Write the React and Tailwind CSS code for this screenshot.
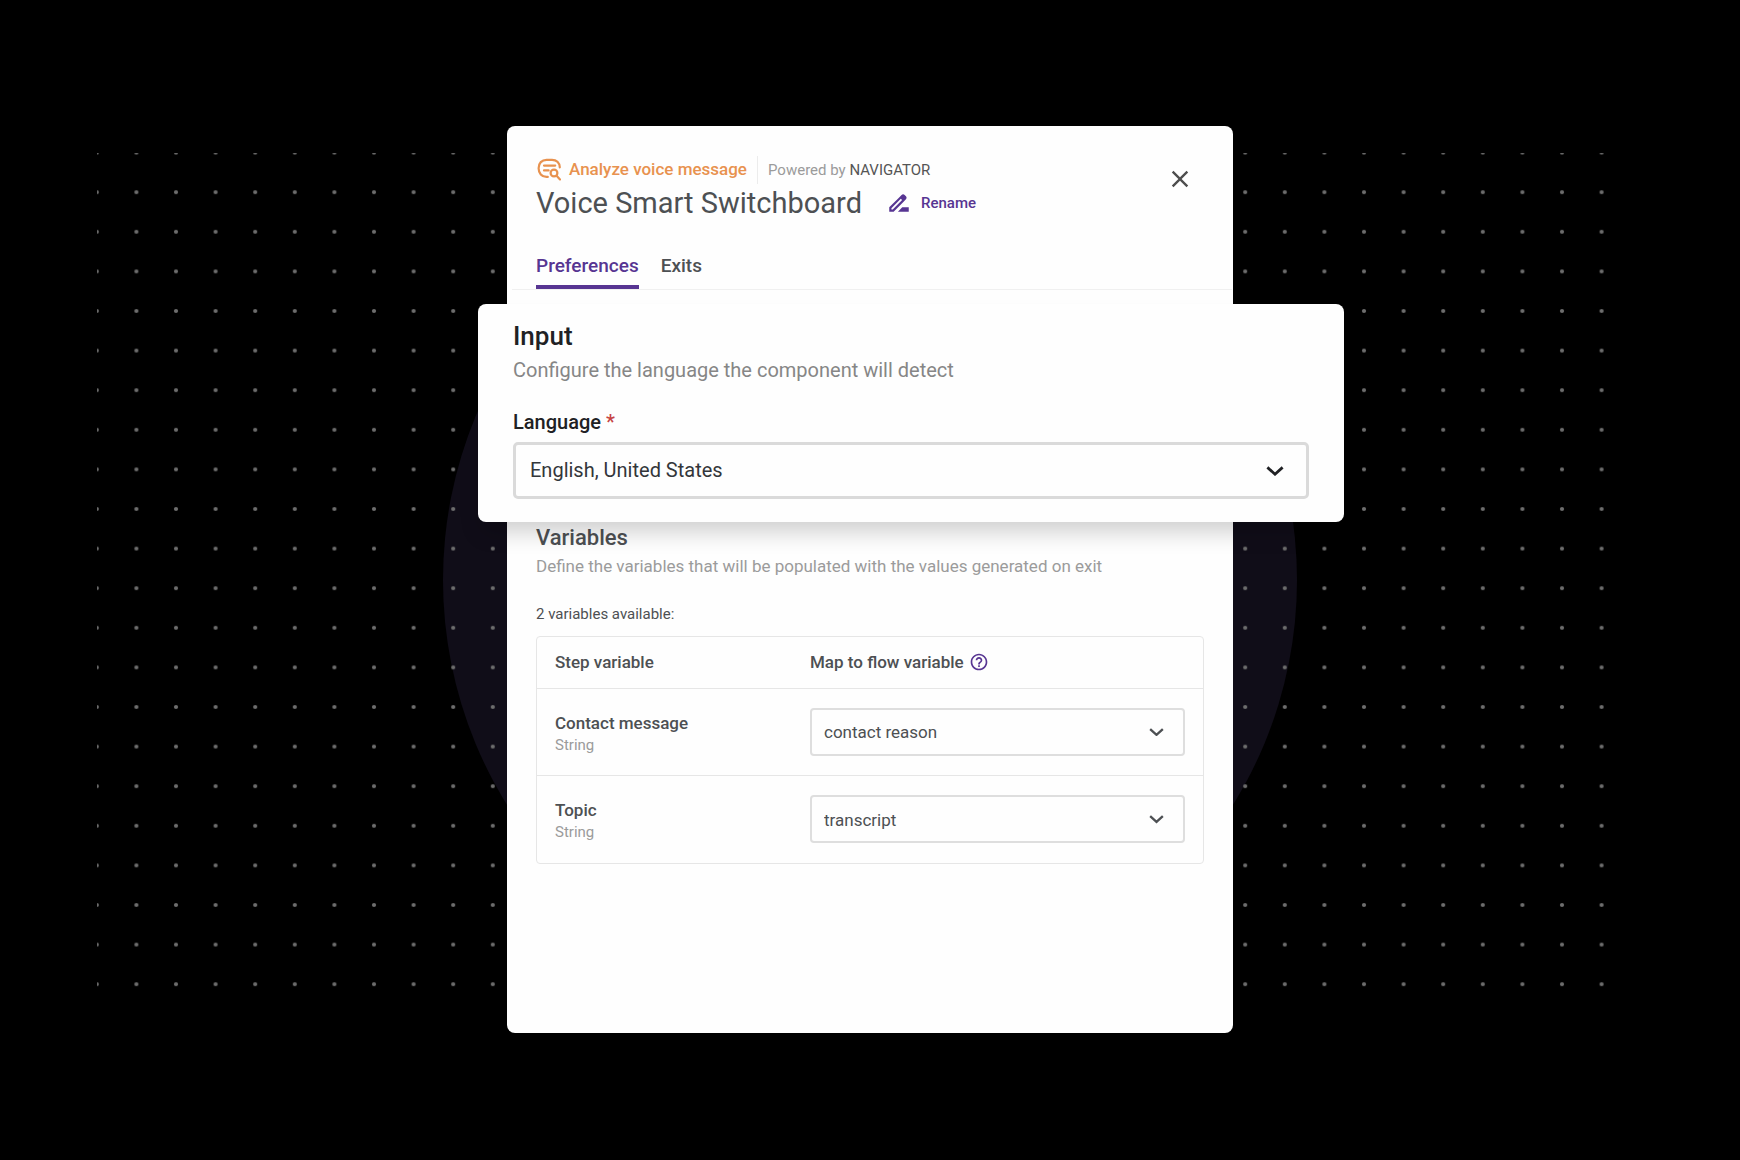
import { MdClose, MdDriveFileRenameOutline, MdHelpOutline } from "react-icons/md";

const variables = [
  { id: "contact-message", name: "Contact message", type: "String", value: "contact reason" },
  { id: "topic", name: "Topic", type: "String", value: "transcript" },
];

function Backdrop() {
  return (
    <svg
      className="absolute inset-0 h-full w-full"
      viewBox="0 0 1740 1160"
      preserveAspectRatio="xMidYMid slice"
      aria-hidden="true"
    >
      <defs>
        <pattern id="dots" x="77" y="132.8" width="39.6" height="39.6" patternUnits="userSpaceOnUse">
          <circle cx="19.8" cy="19.8" r="2.1" fill="#6e6e6e" />
        </pattern>
      </defs>
      <circle cx="870" cy="580" r="427" fill="#100d18" />
      <rect x="97" y="153" width="1507" height="850" fill="url(#dots)" />
    </svg>
  );
}

function AnalyzeIcon() {
  return (
    <svg className="size-6 shrink-0" viewBox="0 0 24 24" fill="none" stroke="currentColor" strokeWidth="2.2" strokeLinecap="round" aria-hidden="true">
      <path d="M22.8 9.4C22.6 4.8 19.5 1.8 15 1.8H9.5C4.8 1.8 1.6 5.2 1.6 10.2S4.8 18.9 9.5 18.9H10.8" />
      <path d="M7 7.6H18.2M7 12.4H11.6" />
      <circle cx="17" cy="15" r="3.4" />
      <path d="M19.6 17.8 23 21.4" />
    </svg>
  );
}

function Chevron({ className }) {
  return (
    <svg className={className} viewBox="0 0 18 10" fill="none" stroke="currentColor" strokeWidth="2.8" aria-hidden="true">
      <path d="M1.4 1.4 9 8.2 16.6 1.4" />
    </svg>
  );
}

export default function App() {
  return (
    <div className="relative flex min-h-screen items-center justify-center overflow-hidden bg-black pt-8 pb-[34px] font-['Roboto',sans-serif]">
      <Backdrop />
      <main className="relative w-full max-w-[726px] rounded-lg bg-[#fefefe] pb-[169px] text-[#4d5053]">
        <header className="flex items-start justify-between pt-[29px] pr-[39px] pl-[29px]">
          <div>
            <div className="flex h-[31px] items-center pl-px">
              <div className="flex items-center gap-2 text-[#e8924f]">
                <AnalyzeIcon />
                <span className="text-[17px] font-medium">Analyze voice message</span>
              </div>
              <span className="mx-[10px] h-7 w-px bg-[#ececec]" />
              <span className="text-[15px] text-[#9b9b9b]">
                Powered by <span className="text-[#555555]">NAVIGATOR</span>
              </span>
            </div>
            <div className="flex items-center gap-6">
              <h1 className="text-[29px] leading-[35px]">Voice Smart Switchboard</h1>
              <button type="button" className="flex items-center gap-[9px] text-[15px] font-medium text-[#573592]">
                <MdDriveFileRenameOutline className="size-[26px]" />
                Rename
              </button>
            </div>
          </div>
          <button type="button" aria-label="Close" className="mt-[10px] text-[#4d4d4d]">
            <MdClose className="size-7" />
          </button>
        </header>

        <nav className="mr-[1px] ml-[5px] flex h-[69px] items-end gap-[22px] border-b border-[#f0f0f0] pl-6">
          <a href="#preferences" className="h-[35px] border-b-4 border-[#573592] text-[19px] leading-6 font-medium text-[#573592]">Preferences</a>
          <a href="#exits" className="h-[35px] text-[19px] leading-6 font-medium">Exits</a>
        </nav>

        <section className="relative mt-[14px] mr-[-111px] ml-[-29px] rounded-lg bg-[#fefefe] px-[35px] pt-4 pb-[23px] text-[#202124] shadow-[0_14px_22px_-4px_rgba(0,0,0,0.19)]">
          <h2 className="text-[26px] leading-8 font-medium">Input</h2>
          <p className="mt-1 text-[20px] leading-7 text-[#868686]">Configure the language the component will detect</p>
          <label htmlFor="language" className="mt-6 block text-[20px] leading-7 font-medium">
            Language <span className="text-[#c74444]">*</span>
          </label>
          <div className="relative mt-[6px]">
            <select id="language" className="h-[57px] w-full appearance-none rounded-[5px] border-[3px] border-[#dadada] bg-[#fefefe] px-[14px] text-[20px] text-[#33363a]">
              <option>English, United States</option>
            </select>
            <Chevron className="pointer-events-none absolute top-6 right-[25px] w-[18px] text-[#202124]" />
          </div>
        </section>

        <section className="px-[29px]">
          <h2 className="mt-[2px] text-[22px] leading-7 font-medium">Variables</h2>
          <p className="mt-[2px] text-[17px] leading-6 text-[#9b9b9b]">
            Define the variables that will be populated with the values generated on exit
          </p>
          <p className="mt-6 text-[15px] leading-6">2 variables available:</p>
          <div className="mt-[10px] rounded border border-[#e6e6e6]">
            <table className="w-full table-fixed border-collapse text-left">
              <thead>
                <tr className="h-[52px]">
                  <th scope="col" className="w-[273px] pl-[18px] text-[17px] font-medium">Step variable</th>
                  <th scope="col" className="text-[17px] font-medium">
                    <span className="flex items-center gap-[5px]">
                      Map to flow variable
                      <MdHelpOutline className="size-5 text-[#573592]" />
                    </span>
                  </th>
                </tr>
              </thead>
              <tbody>
                {variables.map((item) => (
                  <tr key={item.id} className="h-[87px] border-t border-[#e6e6e6]">
                    <td className="pt-[2px] pl-[18px]">
                      <label htmlFor={item.id} className="block text-[17px] leading-6 font-medium">{item.name}</label>
                      <span className="block text-[15px] leading-5 text-[#9b9b9b]">{item.type}</span>
                    </td>
                    <td className="pr-[18px]">
                      <div className="relative">
                        <select id={item.id} className="block h-12 w-full appearance-none rounded border-2 border-[#dedede] bg-[#fefefe] px-3 pt-[2px] text-[17px]">
                          <option>{item.value}</option>
                        </select>
                        <Chevron className="pointer-events-none absolute top-5 right-[21px] w-[15px]" />
                      </div>
                    </td>
                  </tr>
                ))}
              </tbody>
            </table>
          </div>
        </section>
      </main>
    </div>
  );
}
